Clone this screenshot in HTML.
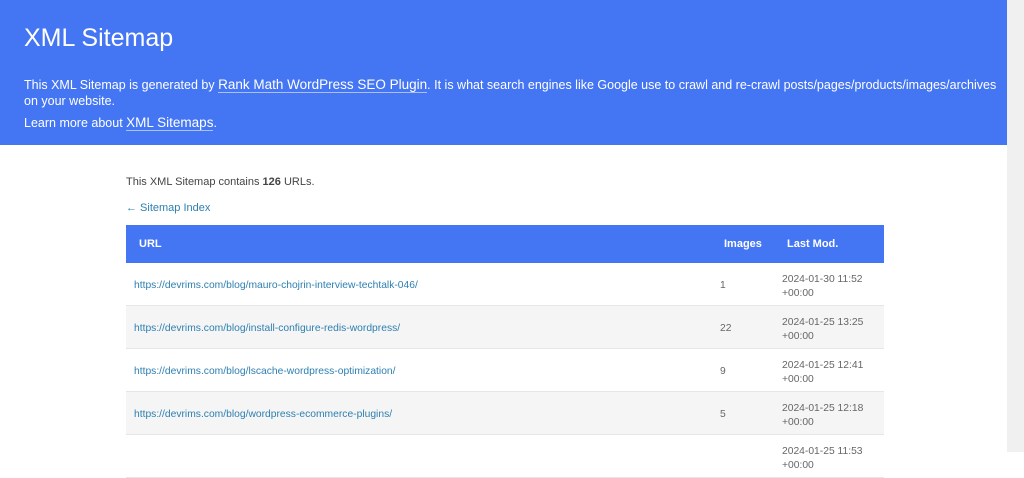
<!DOCTYPE html>
<html><head><meta charset="utf-8"><style>
*{margin:0;padding:0;box-sizing:border-box}
html,body{width:1024px;height:452px;overflow:hidden;background:#fff;font-family:"Liberation Sans","DejaVu Sans",sans-serif}
#hd{position:absolute;left:0;top:0;width:1007px;height:145px;background:#4475f2;color:#fff}
#hd h1{position:absolute;left:24px;top:24px;font-size:25px;font-weight:normal;letter-spacing:0}
#hd p{position:absolute;left:24px;font-size:12.5px;line-height:16px}
#hd a{color:#fff;text-decoration:none;border-bottom:1px solid #a9c0fb;font-size:13.5px}
#sb{position:absolute;left:1007px;top:0;width:17px;height:452px;background:#f0f0f0}
#th{position:absolute;left:1010px;top:14px;width:11px;height:34px;background:#c2c2c2}
.t{position:absolute;font-size:11px;color:#444}
.a{color:#2d7fb1}
#tbl{position:absolute;left:126px;top:225px;width:758px}
.hr{height:38px;background:#4475f2;color:#fff;font-weight:bold;font-size:11px;position:relative}
.row{height:43px;position:relative;border-bottom:1px solid #e6e6e6;font-size:10.3px;color:#666}
.row:nth-child(even){background:#f5f5f5}
.row .u{position:absolute;left:8px;top:17px;color:#2d7fb1}
.row .i{position:absolute;left:594px;top:17px}
.row .d{position:absolute;left:656px;top:10px;line-height:14px}
</style></head><body>
<div id="hd">
<h1>XML Sitemap</h1>
<p style="top:77px">This XML Sitemap is generated by <a>Rank Math WordPress SEO Plugin</a>. It is what search engines like Google use to crawl and re-crawl posts/pages/products/images/archives<br>on your website.</p>
<p style="top:115px">Learn more about <a>XML Sitemaps</a>.</p>
</div>
<div class="t" style="left:126px;top:176px">This XML Sitemap contains <b>126</b> URLs.</div>
<div class="t a" style="left:126px;top:202px">← Sitemap Index</div>
<div id="tbl">
<div class="hr"><span style="position:absolute;left:13px;top:13px">URL</span><span style="position:absolute;left:598px;top:13px">Images</span><span style="position:absolute;left:661px;top:13px">Last Mod.</span></div>
<div>
<div class="row"><span class="u">https://devrims.com/blog/mauro-chojrin-interview-techtalk-046/</span><span class="i">1</span><span class="d">2024-01-30 11:52<br>+00:00</span></div>
<div class="row"><span class="u">https://devrims.com/blog/install-configure-redis-wordpress/</span><span class="i">22</span><span class="d">2024-01-25 13:25<br>+00:00</span></div>
<div class="row"><span class="u">https://devrims.com/blog/lscache-wordpress-optimization/</span><span class="i">9</span><span class="d">2024-01-25 12:41<br>+00:00</span></div>
<div class="row"><span class="u">https://devrims.com/blog/wordpress-ecommerce-plugins/</span><span class="i">5</span><span class="d">2024-01-25 12:18<br>+00:00</span></div>
<div class="row"><span class="u"></span><span class="i"></span><span class="d">2024-01-25 11:53<br>+00:00</span></div>
</div></div>
<div id="sb"><div id="th"></div></div>
</body></html>
